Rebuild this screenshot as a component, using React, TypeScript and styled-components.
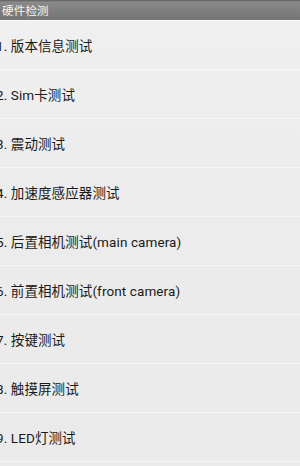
import React from "react";
import styled, { createGlobalStyle } from "styled-components";

const Global = createGlobalStyle`
  html, body { margin: 0; padding: 0; background: #ececec; }
  body { width: 300px; height: 466px; overflow: hidden; }
`;

const Screen = styled.div`
  width: 300px;
  height: 466px;
  display: flex;
  flex-direction: column;
  background: linear-gradient(180deg, #f0f0f0 0%, #ececec 40%, #eaeaea 100%);
  font-family: Roboto, "Noto Sans CJK SC", sans-serif;
  overflow: hidden;
`;

const TitleBar = styled.div`
  height: 21px;
  flex: 0 0 21px;
  display: flex;
  align-items: center;
  padding-left: 2px;
  box-sizing: border-box;
  background: linear-gradient(180deg, #5e5e5e 0px, #8a8a8a 2px, #7e7e7e 11px, #767676 100%);
  border-bottom: 1px solid #fafafa;
  color: #f4f4f4;
  font-size: 11.5px;
  letter-spacing: 0.2px;
`;

const List = styled.div`
  display: flex;
  flex-direction: column;
`;

const Row = styled.div`
  height: 49px;
  flex: 0 0 49px;
  box-sizing: border-box;
  display: flex;
  align-items: center;
  border-bottom: 1px solid #f6f6f6;
`;

const Label = styled.span`
  margin-left: -4px;
  font-size: 13.5px;
  color: #1a1a1a;
  letter-spacing: 0.1px;
  white-space: nowrap;
`;

const items = [
  "1. 版本信息测试",
  "2. Sim卡测试",
  "3. 震动测试",
  "4. 加速度感应器测试",
  "5. 后置相机测试(main camera)",
  "6. 前置相机测试(front camera)",
  "7. 按键测试",
  "8. 触摸屏测试",
  "9. LED灯测试",
];

export default function App() {
  return (
    <>
      <Global />
      <Screen>
        <TitleBar>硬件检测</TitleBar>
        <List>
          {items.map((t) => (
            <Row key={t}>
              <Label>{t}</Label>
            </Row>
          ))}
        </List>
      </Screen>
    </>
  );
}
